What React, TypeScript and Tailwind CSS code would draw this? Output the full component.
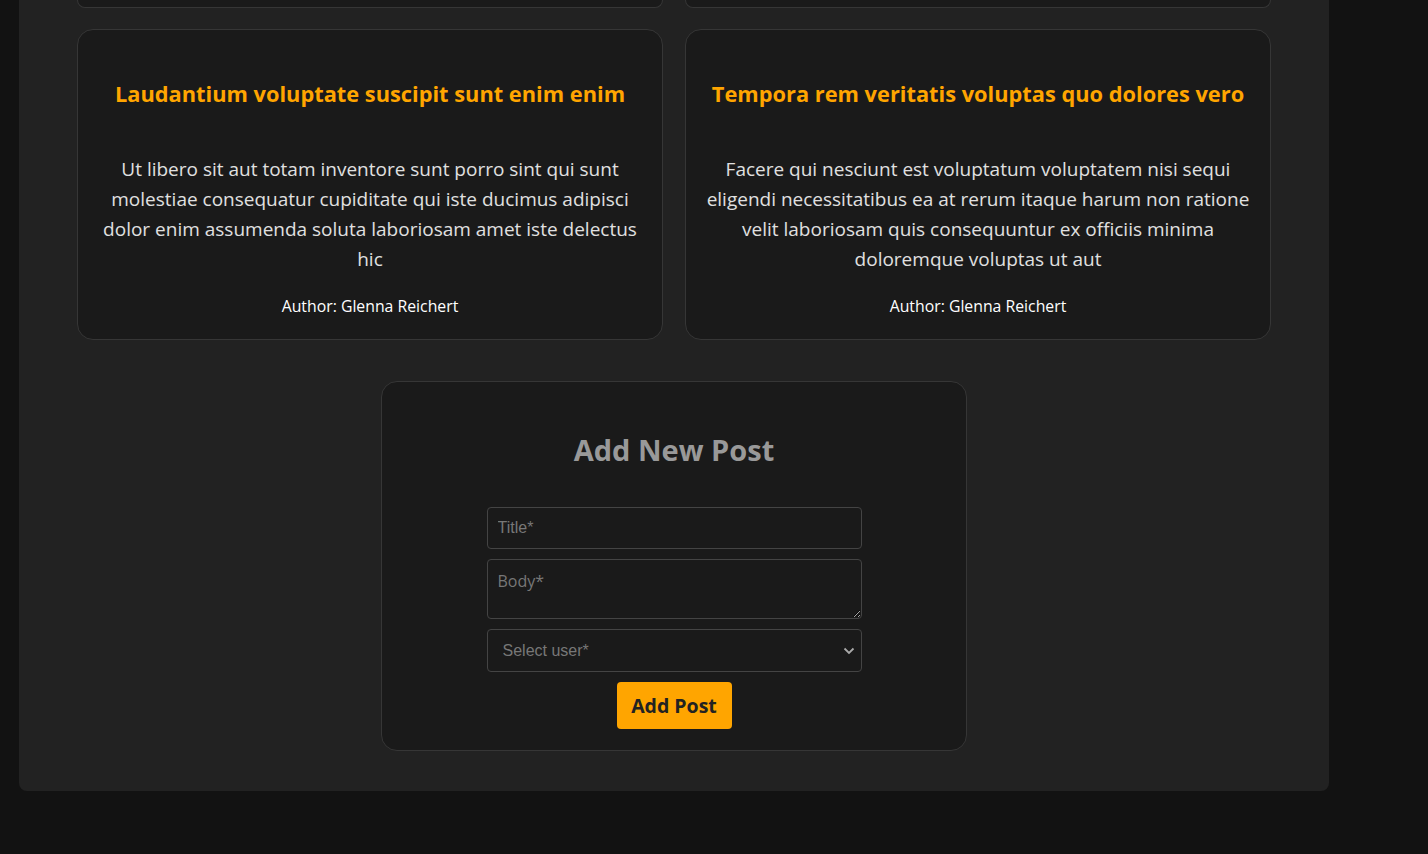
import React from 'react';

interface Post {
    title: string;
    body: string;
    author: string;
}

const posts: Post[] = [
    {
        title: 'Laudantium voluptate suscipit sunt enim enim',
        body: 'Ut libero sit aut totam inventore sunt porro sint qui sunt molestiae consequatur cupiditate qui iste ducimus adipisci dolor enim assumenda soluta laboriosam amet iste delectus hic',
        author: 'Glenna Reichert',
    },
    {
        title: 'Tempora rem veritatis voluptas quo dolores vero',
        body: 'Facere qui nesciunt est voluptatum voluptatem nisi sequi eligendi necessitatibus ea at rerum itaque harum non ratione velit laboriosam quis consequuntur ex officiis minima doloremque voluptas ut aut',
        author: 'Glenna Reichert',
    },
];

function PostCard({ post }: { post: Post }) {
    return (
        <div className="bg-[#1a1a1a] border border-[#363636] rounded-2xl px-5 pt-[49px] pb-[21px] text-center">
            <h3 className="text-[21.8px] leading-[30px] font-bold text-[#ffa500]">{post.title}</h3>
            <p className="mt-[45px] text-[19px] leading-[30px] text-[#e0e0e0]">{post.body}</p>
            <p className="mt-[20px] text-[15.8px] leading-[24px] text-white">Author: {post.author}</p>
        </div>
    );
}

export default function App() {
    return (
        <div
            className="min-h-screen bg-[#121212] pl-[19px] pb-[64px]"
            style={{ fontFamily: '"Open Sans", "Noto Sans", sans-serif' }}
        >
            <div className="w-[1310px] bg-[#222] rounded-b-lg px-[58px] pb-[40px]">
                {/* previous row, scrolled out of view */}
                <div className="grid grid-cols-2 gap-[22px]">
                    <div className="h-[8px] bg-[#1a1a1a] border border-t-0 border-[#363636] rounded-b-2xl" />
                    <div className="h-[8px] bg-[#1a1a1a] border border-t-0 border-[#363636] rounded-b-2xl" />
                </div>

                <div className="grid grid-cols-2 gap-[22px] mt-[21px]">
                    {posts.map((p) => (
                        <PostCard key={p.title} post={p} />
                    ))}
                </div>

                {/* Add post form */}
                <div className="mx-auto mt-[41px] w-[586px] bg-[#1a1a1a] border border-[#363636] rounded-2xl pt-[48px] pb-[21px] flex flex-col items-center">
                    <h2 className="text-[29px] leading-[40px] font-bold text-[#999]">Add New Post</h2>
                    <form className="mt-[37px] w-[375px] flex flex-col items-center gap-[10px]">
                        <input
                            type="text"
                            placeholder="Title*"
                            className="w-full h-[42px] bg-[#1a1a1a] border border-[#444] rounded px-[10px] text-[16px] text-white placeholder:text-[#777] outline-none"
                            style={{ fontFamily: '"Liberation Sans", Arial, sans-serif' }}
                        />
                        <textarea
                            placeholder="Body*"
                            className="w-full h-[60px] bg-[#1a1a1a] border border-[#444] rounded px-[10px] pt-[9px] text-[16px] text-white placeholder:text-[#777] outline-none"
                        />
                        <div className="relative w-full">
                            <select
                                defaultValue=""
                                className="block w-full h-[43px] appearance-none bg-[#1a1a1a] border border-[#444] rounded px-[15px] text-[16px] text-[#777] outline-none"
                                style={{ fontFamily: '"Liberation Sans", Arial, sans-serif' }}
                            >
                                <option value="" disabled>
                                    Select user*
                                </option>
                            </select>
                            <svg
                                className="absolute right-[7px] top-[18px] pointer-events-none"
                                width="12"
                                height="8"
                                viewBox="0 0 12 8"
                                fill="none"
                            >
                                <path d="M1.5 1.5L6 6L10.5 1.5" stroke="#aaa" strokeWidth="1.8" />
                            </svg>
                        </div>
                        <button
                            type="button"
                            className="w-[115px] h-[47px] bg-[#ffa500] rounded text-[19.5px] font-bold text-[#222]"
                        >
                            Add Post
                        </button>
                    </form>
                </div>
            </div>
        </div>
    );
}
